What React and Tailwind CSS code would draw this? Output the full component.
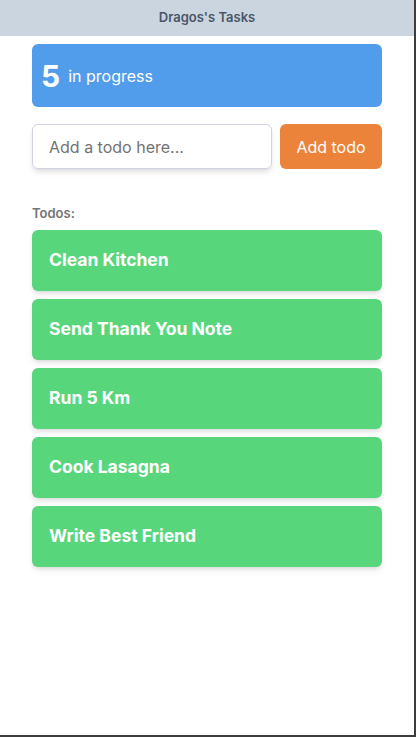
import { useState } from 'react';

const TODOS = ['Clean Kitchen', 'Send Thank You Note', 'Run 5 Km', 'Cook Lasagna', 'Write Best Friend'];

export default function App() {
  const [text, setText] = useState('');

  return (
    <div
      className="w-[416px] h-[737px] bg-white border-r-2 border-b-2 border-[#3c3c3c] overflow-hidden"
      style={{ fontFamily: 'Inter, "Noto Sans", sans-serif' }}
    >
      <header className="h-9 bg-[#cbd5e0] flex items-center justify-center">
        <h1 className="text-[13px] font-semibold text-[#4a5568]">Dragos's Tasks</h1>
      </header>

      <main className="px-8 pt-2">
        <div className="h-[63px] rounded-md bg-[#529deb] flex items-center px-[9px] text-white">
          <span className="text-[30px] font-bold leading-none mr-2">5</span>
          <span className="text-base">in progress</span>
        </div>

        <div className="flex gap-2 mt-[17px]">
          <input
            value={text}
            onChange={(e) => setText(e.target.value)}
            placeholder="Add a todo here..."
            className="w-[240px] h-[45px] rounded-md border border-[#cfd3e3] shadow-md px-4 text-base text-[#4a5568] placeholder:text-[#737373] outline-none"
          />
          <button className="flex-1 h-[45px] rounded-md bg-[#ec833a] text-white text-base">
            Add todo
          </button>
        </div>

        <p className="mt-[35px] text-[13px] font-semibold text-[#757575]">Todos:</p>

        <ul className="mt-[6px] flex flex-col gap-2">
          {TODOS.map((t) => (
            <li
              key={t}
              className="h-[61px] rounded-md bg-[#58d67c] shadow-md flex items-center px-[17px] text-white text-[17.5px] font-bold"
            >
              {t}
            </li>
          ))}
        </ul>
      </main>
    </div>
  );
}
